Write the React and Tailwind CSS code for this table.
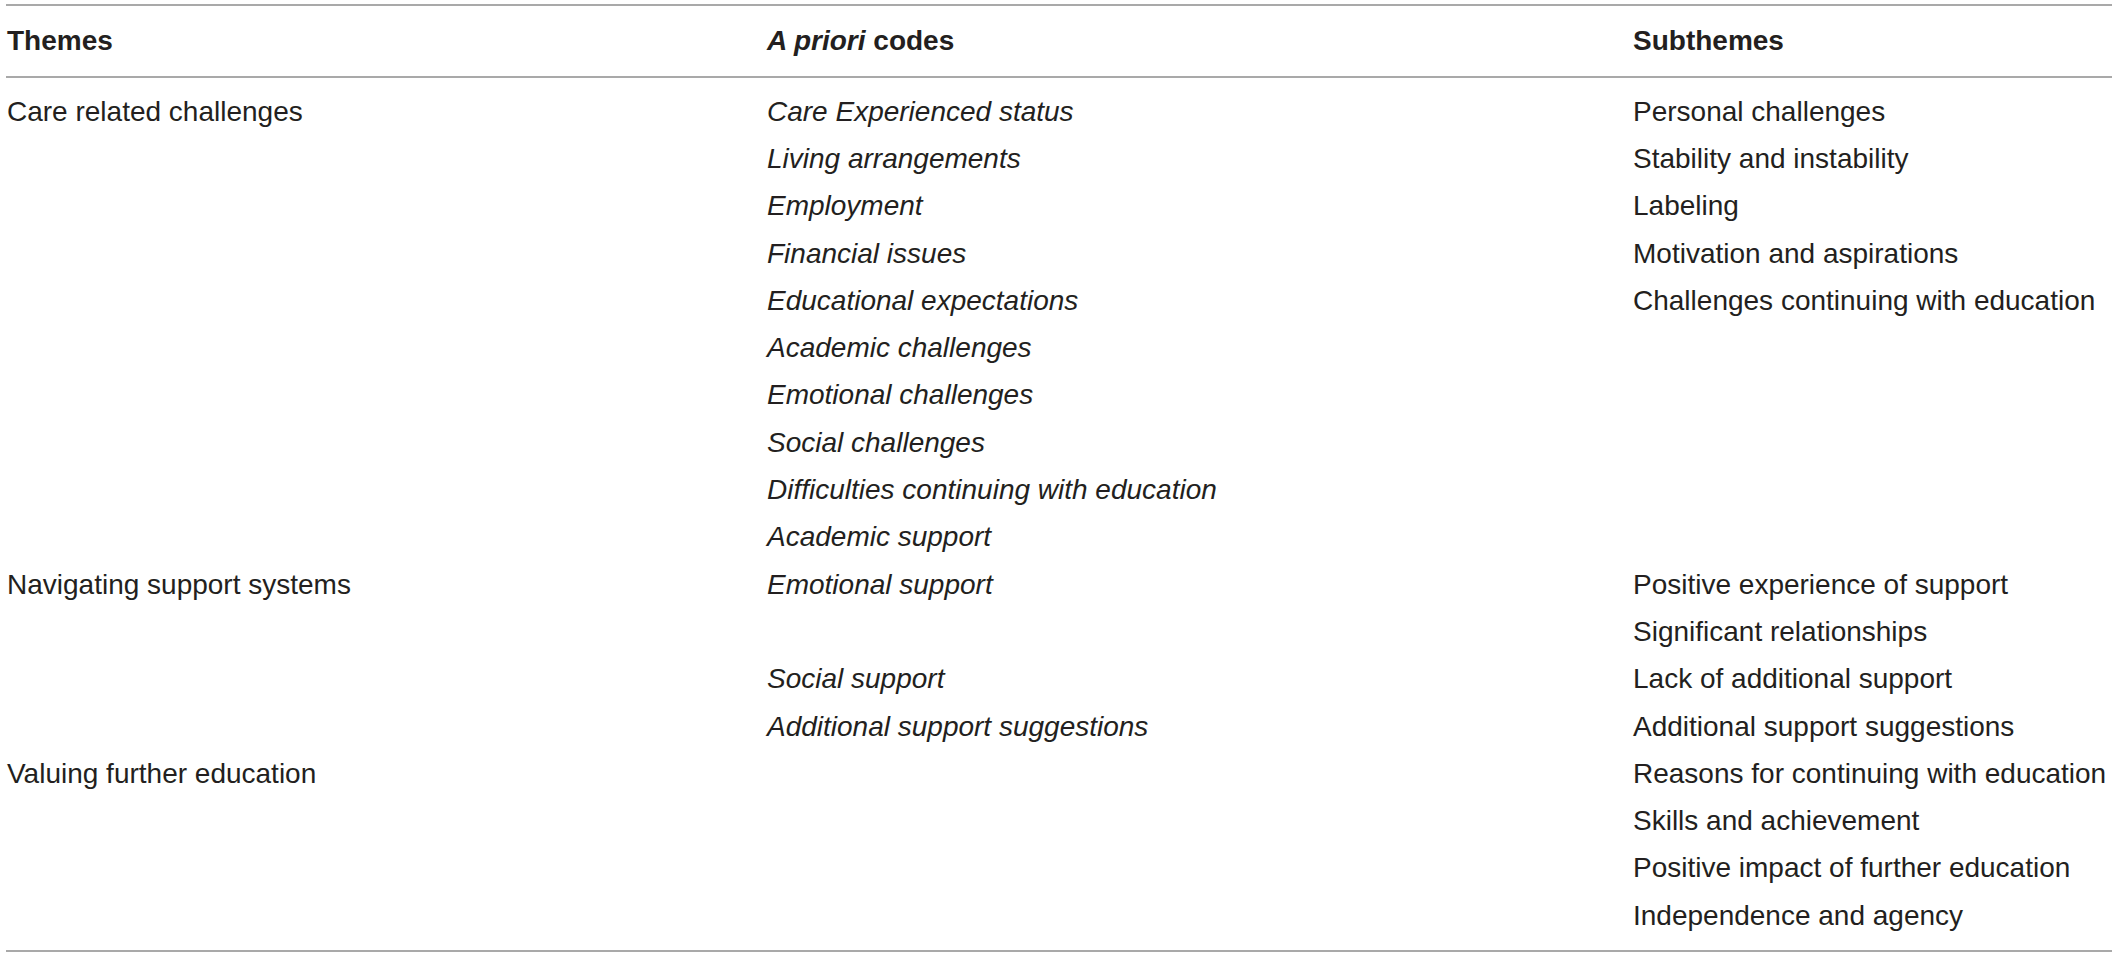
const rows = [
  ['Care related challenges', 'Care Experienced status', 'Personal challenges'],
  ['', 'Living arrangements', 'Stability and instability'],
  ['', 'Employment', 'Labeling'],
  ['', 'Financial issues', 'Motivation and aspirations'],
  ['', 'Educational expectations', 'Challenges continuing with education'],
  ['', 'Academic challenges', ''],
  ['', 'Emotional challenges', ''],
  ['', 'Social challenges', ''],
  ['', 'Difficulties continuing with education', ''],
  ['', 'Academic support', ''],
  ['Navigating support systems', 'Emotional support', 'Positive experience of support'],
  ['', '', 'Significant relationships'],
  ['', 'Social support', 'Lack of additional support'],
  ['', 'Additional support suggestions', 'Additional support suggestions'],
  ['Valuing further education', '', 'Reasons for continuing with education'],
  ['', '', 'Skills and achievement'],
  ['', '', 'Positive impact of further education'],
  ['', '', 'Independence and agency'],
];

const cols = 'grid grid-cols-[760px_866px_1fr]';

export default function App() {
  return (
    <div className="min-h-screen bg-white pt-[4px] pl-[6px] pr-[6px] font-['Liberation_Sans',Arial,sans-serif] text-[28px] text-[#231f20]">
      <div className="border-t-2 border-b-2 border-[#a9a9a9]">
        {/* Header */}
        <div className={`${cols} h-[72px] items-center border-b-2 border-[#a9a9a9] pl-[1px] font-bold`}>
          <div>Themes</div>
          <div>
            <em>A priori</em> codes
          </div>
          <div>Subthemes</div>
        </div>

        {/* Body */}
        <div className="pt-[10px] pb-[11px] pl-[1px]">
          {rows.map((r, i) => (
            <div key={i} className={`${cols} h-[47.3px] items-center whitespace-nowrap`}>
              <div>{r[0]}</div>
              <div className="italic">{r[1]}</div>
              <div>{r[2]}</div>
            </div>
          ))}
        </div>
      </div>
    </div>
  );
}
